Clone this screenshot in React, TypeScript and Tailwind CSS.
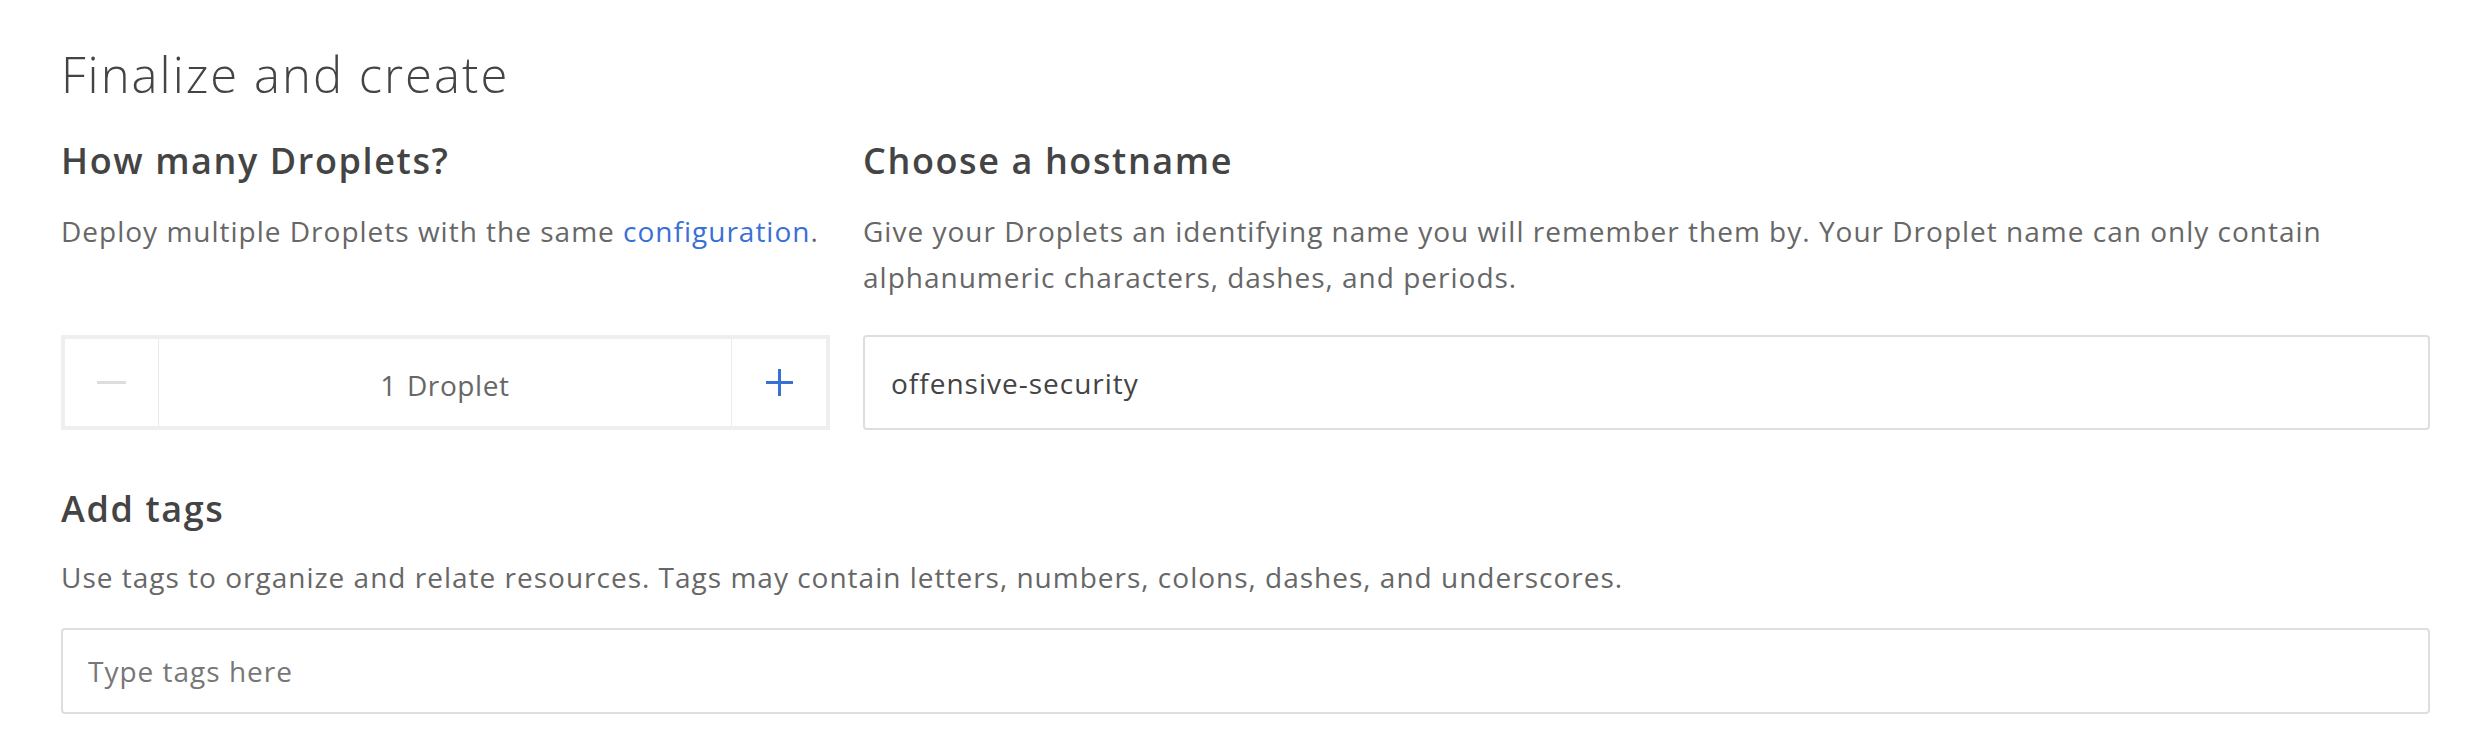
import React, { FC, useState } from 'react'

const font = { fontFamily: '"Open Sans", Lato, sans-serif' }

const SectionTitle: FC<{ children: React.ReactNode }> = ({ children }) => (
  <h3 className="text-[36px] leading-[46px] font-semibold tracking-[1.6px] text-[#444]">
    {children}
  </h3>
)

const Description: FC<{ children: React.ReactNode }> = ({ children }) => (
  <p className="text-[28px] leading-[46px] tracking-[1px] text-[#676767]">{children}</p>
)

const DropletStepper: FC = () => {
  const [count, setCount] = useState(1)
  return (
    <div className="flex h-[95px] border-4 border-[#efefef] bg-white">
      <button
        type="button"
        className="flex w-[94px] items-center justify-center border-r border-[#ebebeb]"
        onClick={() => setCount(Math.max(1, count - 1))}
      >
        <span className="block h-[3px] w-[29px] bg-[#dddddd]" />
      </button>
      <div className="flex flex-1 items-center justify-center gap-[10px] pt-[5px] text-[28px] tracking-[0.6px] text-[#676767]">
        <span>{count}</span>
        <span>{count === 1 ? 'Droplet' : 'Droplets'}</span>
      </div>
      <button
        type="button"
        className="flex w-[95px] items-center justify-center border-l border-[#ebebeb]"
        onClick={() => setCount(count + 1)}
      >
        <svg width="29" height="29" viewBox="0 0 29 29">
          <path d="M14.5 1v27M1 14.5h27" stroke="#3b6fd8" strokeWidth="3" />
        </svg>
      </button>
    </div>
  )
}

const App: FC = () => {
  const [hostname, setHostname] = useState('offensive-security')
  const [tags, setTags] = useState('')

  return (
    <div className="min-h-[752px] bg-white pl-[61px] pr-[39px] pt-[44px]" style={font}>
      <h2 className="text-[49px] leading-[60px] font-light tracking-[2px] text-[#444]">
        Finalize and create
      </h2>

      <div className="mt-[34px] grid grid-cols-[769px_1fr] gap-x-[33px]">
        <SectionTitle>How many Droplets?</SectionTitle>
        <SectionTitle>Choose a hostname</SectionTitle>

        <div className="mt-[24px]">
          <Description>
            Deploy multiple Droplets with the same{' '}
            <a href="#" className="text-[#3b6fd8]">
              configuration
            </a>
            .
          </Description>
        </div>
        <div className="mt-[24px]">
          <Description>
            Give your Droplets an identifying name you will remember them by. Your Droplet name can
            only contain alphanumeric characters, dashes, and periods.
          </Description>
        </div>

        <div className="mt-[35px]">
          <DropletStepper />
        </div>
        <div className="mt-[35px]">
          <input
            value={hostname}
            onChange={(e) => setHostname(e.target.value)}
            className="h-[95px] w-full rounded-[4px] border-2 border-[#dedede] pl-[26px] text-[28px] tracking-[1px] text-[#444] outline-none"
          />
        </div>
      </div>

      <div className="mt-[56px]">
        <SectionTitle>Add tags</SectionTitle>
        <div className="mt-[22px]">
          <Description>
            Use tags to organize and relate resources. Tags may contain letters, numbers, colons,
            dashes, and underscores.
          </Description>
        </div>
        <input
          value={tags}
          onChange={(e) => setTags(e.target.value)}
          placeholder="Type tags here"
          className="mt-[28px] h-[86px] w-full rounded-[4px] border-2 border-[#dedede] pl-[25px] text-[28px] tracking-[1px] text-[#444] outline-none placeholder:text-[#777]"
        />
      </div>
    </div>
  )
}

export default App
